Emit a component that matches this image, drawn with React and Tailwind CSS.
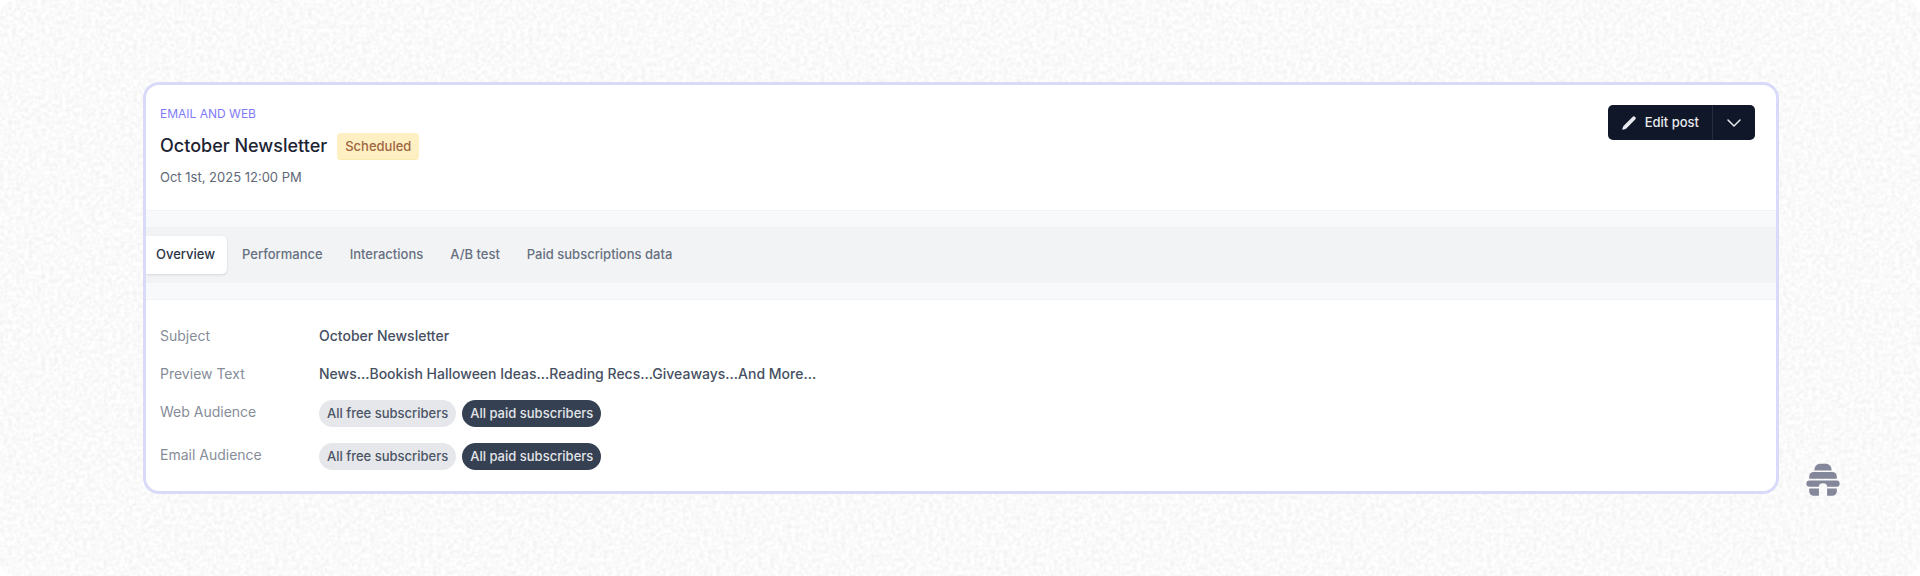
import clsx from 'clsx'
import { ChevronDown } from 'lucide-react'

const tabs = ['Overview', 'Performance', 'Interactions', 'A/B test', 'Paid subscriptions data']

const details = [
  { label: 'Subject', value: 'October Newsletter' },
  { label: 'Preview Text', value: 'News...Bookish Halloween Ideas...Reading Recs...Giveaways...And More...' },
]

const audiences = ['Web Audience', 'Email Audience']

function PaperGrain() {
  return (
    <svg className="absolute inset-0 -z-10 h-full w-full rounded-2xl bg-[#fafafa]" aria-hidden="true">
      <filter id="grain" x="0" y="0" width="100%" height="100%" colorInterpolationFilters="sRGB">
        <feTurbulence type="fractalNoise" baseFrequency="0.24" numOctaves="2" seed="4" />
        <feColorMatrix values="0.09 0 0 0 0.935  0.09 0 0 0 0.935  0.09 0 0 0 0.935  0 0 0 0 1" />
      </filter>
      <rect width="100%" height="100%" filter="url(#grain)" />
    </svg>
  )
}

function PencilIcon() {
  return (
    <svg viewBox="0 0 16 16" className="h-4 w-4" fill="currentColor" aria-hidden="true">
      <path d="M11.5 1.9a1.9 1.9 0 0 1 2.7 2.7L5.3 13.4c-.2.2-.5.4-.8.5l-2.6.8c-.4.1-.7-.2-.6-.6l.9-2.5c.1-.3.3-.6.5-.8Z" />
    </svg>
  )
}

function HiveLogo() {
  return (
    <svg viewBox="0 0 34 34" className="h-[34px] w-[34px]" fill="#84869a" role="img" aria-label="beehiiv">
      <path d="M8.5 7.5V6.2A5.4 5.4 0 0 1 13.9.8h6.2a5.4 5.4 0 0 1 5.4 5.4v1.3Z" />
      <path d="M3.2 15.8v-2.4A4.4 4.4 0 0 1 7.6 9h18.8a4.4 4.4 0 0 1 4.4 4.4v2.4Z" />
      <path d="M3.4 17.6h27.2a3.05 3.05 0 0 1 0 6.1h-9.5a4.1 3.4 0 0 0-8.2 0H3.4a3.05 3.05 0 0 1 0-6.1Z" />
      <path d="M3.2 25.4h9.7v7.3H7.6a4.4 4.4 0 0 1-4.4-4.4ZM21.1 25.4h9.7v2.9a4.4 4.4 0 0 1-4.4 4.4h-5.3Z" />
    </svg>
  )
}

function Chip({ dark, children }) {
  return (
    <span
      className={clsx(
        'rounded-full px-2 text-[13px] leading-[27px] font-medium',
        dark ? 'bg-[#354052] text-[#e3e5e9]' : 'bg-[#e5e7eb] text-[#4b5565]'
      )}
    >
      {children}
    </span>
  )
}

function PostHeader() {
  return (
    <header className="flex items-start justify-between pt-5 pr-[21px] pb-[25px] pl-[14px]">
      <div className="flex flex-col gap-2">
        <p className="text-xs leading-[18px] text-[#7f7bf8]">EMAIL AND WEB</p>
        <div className="flex items-center gap-[10px]">
          <h1 className="text-lg leading-[30px] font-medium text-[#1c2433]">October Newsletter</h1>
          <span className="rounded border-b border-[#fce9b0] bg-[#fef0c3] px-2 text-[13px] leading-[26px] font-medium text-[#a0653f]">
            Scheduled
          </span>
        </div>
        <p className="text-[13px] leading-4 text-[#5f6877]">Oct 1st, 2025 12:00 PM</p>
      </div>

      <div className="flex h-[35px] rounded-[5px] bg-[#0f1728] text-[#e8eaee]">
        <button className="flex items-center gap-2 border-r border-[#252d3d] px-[13px] text-[13px] font-medium">
          <PencilIcon />
          Edit post
        </button>
        <button className="flex w-[42px] items-center justify-center" aria-label="More actions">
          <ChevronDown className="h-6 w-6" strokeWidth={1.5} />
        </button>
      </div>
    </header>
  )
}

function TabBar() {
  return (
    <div className="border-y border-[#f1f3f5] bg-[#f8f9fb] py-4">
      <nav className="flex h-14 items-center gap-[3px] bg-[#f2f3f5]">
        {tabs.map((tab, i) => (
          <button
            key={tab}
            className={clsx(
              'h-[38px] pr-3 text-[13px] font-medium',
              i === 0 ? 'rounded-r-[5px] bg-white pl-[10px] text-[#2b3445] shadow-sm' : 'pl-3 text-[#677080]'
            )}
          >
            {tab}
          </button>
        ))}
      </nav>
    </div>
  )
}

export default function App() {
  return (
    <main className="relative isolate bg-white pt-[82px] pr-[141px] pb-[82px] pl-[143px] font-['Inter',sans-serif]">
      <PaperGrain />

      <section className="overflow-hidden rounded-2xl border-[3px] border-[#d9dafa] bg-white">
        <PostHeader />
        <TabBar />

        <dl className="grid grid-cols-[159px_1fr] pt-6 pb-[21px] pl-[14px] text-sm leading-6">
          {details.map(({ label, value }) => (
            <div key={label} className="col-span-2 mb-[14px] grid grid-cols-subgrid">
              <dt className="text-[#868d99]">{label}</dt>
              <dd className="font-medium text-[#465062]">{value}</dd>
            </div>
          ))}
          {audiences.map((label) => (
            <div key={label} className="col-span-2 mb-4 grid grid-cols-subgrid last:mb-0">
              <dt className="text-[#868d99]">{label}</dt>
              <dd className="flex gap-[6px]">
                <Chip>All free subscribers</Chip>
                <Chip dark>All paid subscribers</Chip>
              </dd>
            </div>
          ))}
        </dl>
      </section>

      <div className="absolute right-20 bottom-[79px]">
        <HiveLogo />
      </div>
    </main>
  )
}
